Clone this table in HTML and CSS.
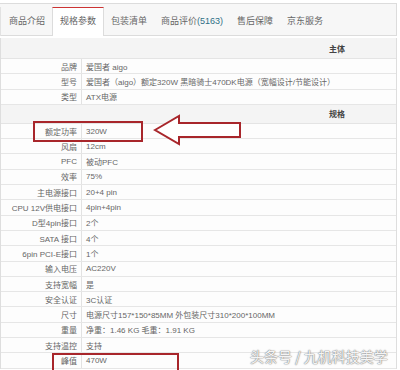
FILE: index.html
```html
<!DOCTYPE html>
<html lang="zh">
<head>
<meta charset="utf-8">
<title>规格参数</title>
<link rel="stylesheet" href="styles.css">
</head>
<body>
<div class="page">
  <div class="tabs">
    <div class="tab first">商品介绍</div>
    <div class="tab active">规格参数</div>
    <div class="tab">包装清单</div>
    <div class="tab">商品评价<span class="count">(5163)</span></div>
    <div class="tab">售后保障</div>
    <div class="tab">京东服务</div>
  </div>
  <div class="spec">
    <div class="sec first">主体</div>
    <div class="row"><div class="k">品牌</div><div class="v">爱国者 aigo</div></div>
    <div class="row"><div class="k">型号</div><div class="v">爱国者（aigo）额定320W 黑暗骑士470DK电源（宽幅设计/节能设计）</div></div>
    <div class="row"><div class="k">类型</div><div class="v">ATX电源</div></div>
    <div class="sec">规格</div>
    <div class="row"><div class="k">额定功率</div><div class="v">320W</div></div>
    <div class="row"><div class="k">风扇</div><div class="v">12cm</div></div>
    <div class="row"><div class="k">PFC</div><div class="v">被动PFC</div></div>
    <div class="row"><div class="k">效率</div><div class="v">75%</div></div>
    <div class="row"><div class="k">主电源接口</div><div class="v">20+4 pin</div></div>
    <div class="row"><div class="k">CPU 12V供电接口</div><div class="v">4pin+4pin</div></div>
    <div class="row"><div class="k">D型4pin接口</div><div class="v">2个</div></div>
    <div class="row"><div class="k">SATA 接口</div><div class="v">4个</div></div>
    <div class="row"><div class="k">6pin PCI-E接口</div><div class="v">1个</div></div>
    <div class="row"><div class="k">输入电压</div><div class="v">AC220V</div></div>
    <div class="row"><div class="k">支持宽幅</div><div class="v">是</div></div>
    <div class="row"><div class="k">安全认证</div><div class="v">3C认证</div></div>
    <div class="row"><div class="k">尺寸</div><div class="v">电源尺寸157*150*85MM 外包装尺寸310*200*100MM</div></div>
    <div class="row"><div class="k">重量</div><div class="v">净重：1.46 KG 毛重：1.91 KG</div></div>
    <div class="row"><div class="k">支持温控</div><div class="v">支持</div></div>
    <div class="row"><div class="k">峰值</div><div class="v">470W</div></div>
  </div>

  <div class="mark mark-1"></div>
  <div class="mark mark-2"></div>
  <svg class="arrow" width="100" height="40" viewBox="150 110 100 40">
    <polygon points="155,130 179,116 179,123 240,123 240,137 179,137 179,144" fill="#fff" stroke="#a8262b" stroke-width="2" stroke-linejoin="miter"/>
  </svg>
  <div class="watermark">头条号 / 九机科技美学</div>
</div>
</body>
</html>
```

FILE: styles.css
```css
html, body {
  margin: 0;
  padding: 0;
  background: #fff;
}

.page {
  position: relative;
  width: 400px;
  height: 370px;
  overflow: hidden;
  padding-top: 3px;
  box-sizing: border-box;
  font-family: "Liberation Sans", "Noto Sans CJK SC", sans-serif;
  color: #666;
}

.tabs {
  width: 397px;
  box-sizing: border-box;
  height: 33px;
  display: flex;
  align-items: flex-end;
  background: #f7f7f7;
  border-top: 1px solid #dcdcdc;
  border-bottom: 1px solid #dcdcdc;
  border-right: 1px solid #dcdcdc;
}

.tab {
  height: 29px;
  line-height: 29px;
  padding: 0 7px;
  font-size: 9px;
  color: #666;
  white-space: nowrap;
  margin-bottom: -1px;
}

.tab.first {
  padding-left: 8px;
  border-left: 1px solid #e2e2e2;
}

.tab.active {
  background: #fff;
  border-top: 1px solid #c33;
  border-left: 1px solid #dcdcdc;
  border-right: 1px solid #dcdcdc;
  height: 29px;
  box-sizing: border-box;
  line-height: 27px;
  padding: 0 7px;
  margin-bottom: -1px;
}

.count {
  color: #2f6f86;
}

.spec {
  margin-top: 2px;
  width: 397px;
  box-sizing: border-box;
  border-left: 1px solid #dedede;
  border-right: 1px solid #dedede;
}

.sec {
  height: 19px;
  box-sizing: border-box;
  background: #f4f4f4;
  border-bottom: 1px solid #e4e4e4;
  display: flex;
  align-items: center;
  justify-content: flex-end;
  padding-right: 51px;
  font-size: 8px;
  font-weight: bold;
  color: #444;
}

.sec.first {
  height: 21px;
}

.row {
  height: 15.3px;
  box-sizing: border-box;
  display: flex;
  border-bottom: 1px solid #e6e6e6;
  background: #fdfdfd;
  font-size: 8px;
  white-space: nowrap;
}

.k {
  width: 81px;
  flex: none;
  box-sizing: border-box;
  border-right: 1px solid #e2e2e2;
  text-align: right;
  padding-right: 4px;
  display: flex;
  align-items: center;
  justify-content: flex-end;
  color: #666;
}

.v {
  padding-left: 4px;
  display: flex;
  align-items: center;
  color: #666;
}

.mark {
  position: absolute;
  border: 2px solid #a8262b;
  box-sizing: border-box;
}

.mark-1 {
  left: 33px;
  top: 121px;
  width: 110px;
  height: 21px;
}

.mark-2 {
  left: 52px;
  top: 353px;
  width: 127px;
  height: 22px;
}

.arrow {
  position: absolute;
  left: 150px;
  top: 110px;
}

.watermark {
  position: absolute;
  left: 250px;
  top: 347px;
  font-size: 14px;
  line-height: 18px;
  font-family: "Noto Sans CJK SC", sans-serif;
  color: rgba(255, 255, 255, 0.92);
  text-shadow: 0 0 1px #8a8a8a, 0 0 1px #8a8a8a, 0 0 2px #aaa;
  white-space: nowrap;
}
```
